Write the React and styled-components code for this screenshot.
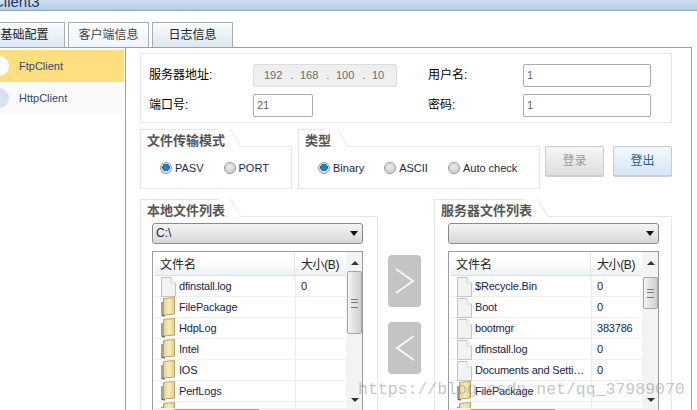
import React from 'react';
import styled, { createGlobalStyle } from 'styled-components';

const Global = createGlobalStyle`
  html, body { margin: 0; padding: 0; background: #fff; }
  body { width: 697px; height: 410px; overflow: hidden; font-family: "Liberation Sans", "Noto Sans CJK SC", sans-serif; font-size: 11px; color: #111; }
  * { box-sizing: border-box; }
`;

const Page = styled.div`
  position: relative;
  width: 697px;
  height: 410px;
  overflow: hidden;
  display: flex;
  flex-direction: column;
`;

const TitleBar = styled.div`
  height: 11px;
  flex: none;
  overflow: hidden;
  background: linear-gradient(#cfe0f0, #b3cde6);
  border-bottom: 1px solid #8ea6bf;
  font-size: 15px;
  line-height: 4px;
  color: #1e3a5a;
  margin-left: -7px;
`;

const TabStrip = styled.div`
  display: flex;
  gap: 3px;
  height: 36px;
  flex: none;
  padding-top: 11px;
  margin-left: -16px;
  width: 706px;
`;

const Tab = styled.div`
  width: 81px;
  height: 25px;
  border: 1px solid #a6adb5;
  border-bottom: 0;
  background: ${p => p.$active ? 'linear-gradient(#fdfeff, #eef4fa)' : 'linear-gradient(#fafbfd, #dce7f2)'};
  text-align: center;
  font-size: 12px;
  line-height: 25px;
  color: ${p => p.$active ? '#444' : '#222'};
`;

const Body = styled.div`
  flex: 1;
  width: 692px;
  display: flex;
  min-height: 0;
  border-top: 1px solid #9aa0a6;
  border-right: 1px solid #9aa0a6;
`;

const Sidebar = styled.div`
  width: 126px;
  flex: none;
  padding-top: 2px;
  border-right: 1px solid #9aa0a6;
`;

const SideItem = styled.div`
  display: flex;
  align-items: center;
  gap: 10px;
  height: 32px;
  width: 124px;
  overflow: hidden;
  background: ${p => p.$active ? '#ffdf7d' : '#fafafa'};
  color: #36486b;
  font-size: 11px;
`;

const SideDot = styled.span`
  width: 20px;
  height: 20px;
  margin-left: -11px;
  border-radius: 50%;
  flex: none;
  background: ${p => p.$active ? '#fff' : '#d6e2ef'};
`;

const Main = styled.div`
  flex: 1;
  min-width: 0;
  padding: 5px 19px 0 14px;
  display: flex;
  flex-direction: column;
  gap: 6px;
`;

const ServerBox = styled.div`
  height: 70px;
  border: 1px solid #e6e6e6;
  display: grid;
  grid-template-columns: 279px 1fr;
  padding: 10px 0 0 8px;
`;

const FormRow = styled.div`
  display: flex;
  align-items: flex-start;
  height: 30px;
`;

const Label = styled.span`
  width: ${p => p.$w}px;
  flex: none;
  font-size: 12px;
  line-height: 22px;
  color: #000;
`;

const Field = styled.div`
  width: ${p => p.$w}px;
  height: 23px;
  border: 1px solid #ababab;
  border-radius: 2px;
  background: #fff;
  color: #5a6478;
  line-height: 21px;
  padding-left: 3px;
`;

const IpField = styled.div`
  width: 144px;
  height: 23px;
  border: 1px solid #dcdcdc;
  border-radius: 2px;
  background: #efefef;
  color: #6a6a6a;
  line-height: 21px;
  padding-left: 10px;
  display: flex;
`;

const IpPart = styled.span`
  width: 36px;
  flex: none;
`;

const IpDot = styled.span`
  margin-left: 8px;
`;

const Middle = styled.div`
  display: flex;
  height: 60px;
  gap: 6px;
`;

const Group = styled.div`
  width: ${p => p.$w}px;
  flex: none;
  display: flex;
  flex-direction: column;
`;

const GroupTab = styled.div`
  position: relative;
  z-index: 1;
  width: ${p => p.$w}px;
  height: 18px;
  margin-bottom: -1px;
  background: #fff;
  border: 1px solid #e6e6e6;
  border-width: 1px 0 0 1px;
  padding-left: 6px;
  font-size: 13px;
  font-weight: bold;
  line-height: 22px;
  white-space: nowrap;
  color: #555;
  &::after {
    content: '';
    position: absolute;
    z-index: -1;
    top: -1px;
    right: -6px;
    width: 12px;
    height: 18px;
    background: #fff;
    border-right: 1px solid #e6e6e6;
    transform: skewX(30deg);
    transform-origin: top right;
  }
`;

const GroupBody = styled.div`
  flex: 1;
  border: 1px solid #e6e6e6;
  min-height: 0;
`;

const RadioRow = styled.div`
  display: flex;
  align-items: center;
  height: 100%;
  padding: 1px 0 0 19px;
  gap: ${p => p.$gap}px;
`;

const RadioItem = styled.label`
  display: flex;
  align-items: center;
  gap: 3px;
  color: #1b2a4c;
`;

const RadioDot = styled.span`
  width: 12px;
  height: 12px;
  border-radius: 50%;
  flex: none;
  border: 1px solid #9a9a9a;
  background: ${p => p.$on
    ? 'radial-gradient(circle at 50% 45%, #1f7fc4 0 3px, #0b4f86 3.5px, #dfe5ea 4px, #c6ccd2 100%)'
    : 'radial-gradient(circle at 45% 40%, #eeeeee, #c4c4c4)'};
`;

const ActionButtons = styled.div`
  display: flex;
  gap: 9px;
  padding-top: 17px;
  margin-left: -1px;
`;

const ActionButton = styled.div`
  width: 59px;
  height: 31px;
  border: 1px solid #c9ccd0;
  border-bottom-width: 2px;
  border-radius: 2px;
  text-align: center;
  line-height: 28px;
  font-size: 12px;
  background: ${p => p.$on ? 'linear-gradient(#f4f8fc, #d6e6f4)' : 'linear-gradient(#f6f6f6, #dedede)'};
  color: ${p => p.$on ? '#2f5f98' : '#9a9a9a'};
`;

const Lists = styled.div`
  display: flex;
  flex: 1;
  min-height: 0;
  margin-top: 4px;
`;

const FileGroup = styled(Group)`
  height: 220px;
`;

const FileGroupBody = styled(GroupBody)`
  padding: 6px ${p => p.$right}px 0 ${p => p.$left}px;
  overflow: hidden;
`;

const Combo = styled.div`
  position: relative;
  height: 21px;
  border: 1px solid #8a8a8a;
  border-radius: 3px;
  background: linear-gradient(#f4f4f4, #d8d8d8);
  padding-left: 3px;
  line-height: 19px;
  font-size: 12px;
  color: #1b2a4c;
  &::after {
    content: '';
    position: absolute;
    right: 4px;
    top: 7px;
    border: 4px solid transparent;
    border-top: 5px solid #111;
    border-bottom: 0;
  }
`;

const ListFrame = styled.div`
  position: relative;
  margin-top: 7px;
  height: 170px;
  border: 1px solid #9c9c9c;
  border-bottom: 0;
  padding-left: 1px;
  display: flex;
  overflow: hidden;
`;

const ListCols = styled.div`
  width: 192px;
  flex: none;
`;

const HeaderRow = styled.div`
  display: grid;
  grid-template-columns: 140px 52px;
  height: 24px;
  background: linear-gradient(#ffffff 30%, #eef1f4);
  border-bottom: 1px solid #e0e0e0;
  font-size: 12px;
  line-height: 26px;
  color: #222;
`;

const HeaderCell = styled.div`
  padding-left: ${p => p.$pad}px;
  border-left: ${p => p.$line ? '1px solid #e4e4e4' : '0'};
  white-space: nowrap;
  letter-spacing: ${p => p.$line ? '-0.4px' : '0'};
`;

const Row = styled.div`
  display: grid;
  grid-template-columns: 141px 51px;
  height: 21px;
  border-bottom: 1px solid #eeeeee;
  line-height: 21px;
  letter-spacing: -0.2px;
  color: #1b2350;
`;

const NameCell = styled.div`
  display: flex;
  align-items: center;
  gap: 3px;
  padding-left: 7px;
  white-space: nowrap;
  overflow: hidden;
`;

const SizeCell = styled.div`
  padding-left: 5px;
  border-left: 1px solid #eeeeee;
`;

const ScrollV = styled.div`
  width: 18px;
  flex: none;
  background: #f3f3f3;
  position: relative;
`;

const ScrollArrow = styled.span`
  position: absolute;
  left: 5px;
  ${p => p.$up ? 'top: 9px; border-bottom: 4px solid #333;' : 'top: 146px; border-top: 4px solid #333;'}
  border-left: 4px solid transparent;
  border-right: 4px solid transparent;
`;

const ScrollThumb = styled.div`
  position: absolute;
  left: 1px;
  top: ${p => p.$top}px;
  width: 15px;
  height: ${p => p.$h}px;
  border: 1px solid #a5a5a5;
  border-radius: 2px;
  background: linear-gradient(90deg, #f4f4f4, #cfcfcf);
  &::after {
    content: '';
    position: absolute;
    left: 3px;
    top: 50%;
    margin-top: -4px;
    width: 7px;
    height: 7px;
    border-top: 1px solid #777;
    border-bottom: 1px solid #777;
    background: linear-gradient(transparent 2px, #777 2px 3px, transparent 3px);
  }
`;

const ScrollH = styled.div`
  position: absolute;
  left: 1px;
  right: 1px;
  top: 156px;
  height: 14px;
  background: #f0f0f0;
  &::after {
    content: '';
    position: absolute;
    left: 19px;
    top: 1px;
    width: 85px;
    height: 12px;
    border: 1px solid #a5a5a5;
    border-radius: 2px;
    background: #eaeaea;
  }
`;

const ArrowColumn = styled.div`
  width: 56px;
  flex: none;
  display: flex;
  flex-direction: column;
  align-items: center;
  gap: 15px;
  padding: 56px 3px 0 0;
`;

const ArrowButton = styled.div`
  width: 33px;
  height: 52px;
  border-radius: 4px;
  background: #c4c4c4;
  display: flex;
  align-items: center;
  justify-content: center;
`;

const Watermark = styled.div`
  position: absolute;
  left: 358px;
  top: 380px;
  font-family: "Liberation Mono", monospace;
  font-size: 16.5px;
  color: rgba(140, 140, 140, 0.5);
  white-space: nowrap;
`;

const FileIcon = () => (
  <svg width="15" height="20" viewBox="0 0 15 20" style={{ flex: 'none' }}>
    <path d="M.5.5H10L14.5 6V19.5H.5Z" fill="#f2f2f2" stroke="#c4c4c4" />
    <path d="M10 .5V6H14.5" fill="#fff" stroke="#d4d4d4" />
  </svg>
);

const FolderIcon = () => (
  <svg width="15" height="20" viewBox="0 0 15 20" style={{ flex: 'none' }}>
    <defs>
      <linearGradient id="folderFill" x1="0" x2="1" y1="0" y2="0">
        <stop offset="0" stopColor="#e8cf84" />
        <stop offset="0.5" stopColor="#f8ecc0" />
        <stop offset="1" stopColor="#e6cd80" />
      </linearGradient>
    </defs>
    <path d="M2.5 1.5L13.5.5V17L2.5 18Z" fill="url(#folderFill)" stroke="#b8a264" />
    <path d="M1 5V18.5L4 19" fill="none" stroke="#4a4020" />
  </svg>
);

const Chevron = ({ left }) => (
  <svg width="22" height="28" viewBox="0 0 22 28">
    <path d={left ? 'M20 2L3 14L20 26' : 'M2 2L19 14L2 26'} fill="none" stroke="#fff" strokeWidth="2" opacity="0.85" />
  </svg>
);

const FileList = ({ rows, thumbTop, thumbH }) => (
  <ListFrame>
    <ListCols>
      <HeaderRow>
        <HeaderCell $pad={6}>文件名</HeaderCell>
        <HeaderCell $pad={6} $line>大小(B)</HeaderCell>
      </HeaderRow>
      {rows.map((r, i) => (
        <Row key={i}>
          <NameCell>{r[2] ? <FolderIcon /> : <FileIcon />}{r[0]}</NameCell>
          <SizeCell>{r[1]}</SizeCell>
        </Row>
      ))}
    </ListCols>
    <ScrollV>
      <ScrollArrow $up />
      <ScrollThumb $top={thumbTop} $h={thumbH} />
      <ScrollArrow />
    </ScrollV>
    <ScrollH />
  </ListFrame>
);

const localRows = [
  ['dfinstall.log', '0'],
  ['FilePackage', '', 1],
  ['HdpLog', '', 1],
  ['Intel', '', 1],
  ['IOS', '', 1],
  ['PerfLogs', '', 1],
  ['', '', 1],
];

const serverRows = [
  ['$Recycle.Bin', '0'],
  ['Boot', '0'],
  ['bootmgr', '383786'],
  ['dfinstall.log', '0'],
  ['Documents and Setti…', '0'],
  ['FilePackage', '', 1],
  ['', '', 1],
];

const ipParts = ['192', '168', '100', '10'];

export default function App() {
  return (
    <Page>
      <Global />
      <TitleBar>Client3</TitleBar>
      <TabStrip>
        <Tab>基础配置</Tab>
        <Tab $active>客户端信息</Tab>
        <Tab>日志信息</Tab>
      </TabStrip>
      <Body>
        <Sidebar>
          <SideItem $active><SideDot $active />FtpClient</SideItem>
          <SideItem><SideDot />HttpClient</SideItem>
        </Sidebar>
        <Main>
          <ServerBox>
            <div>
              <FormRow>
                <Label $w={104}>服务器地址:</Label>
                <IpField>
                  {ipParts.map((part, i) => (
                    <IpPart key={part}>{part}{i < 3 && <IpDot>.</IpDot>}</IpPart>
                  ))}
                </IpField>
              </FormRow>
              <FormRow>
                <Label $w={104}>端口号:</Label>
                <Field $w={60}>21</Field>
              </FormRow>
            </div>
            <div>
              <FormRow>
                <Label $w={95}>用户名:</Label>
                <Field $w={128}>1</Field>
              </FormRow>
              <FormRow>
                <Label $w={95}>密码:</Label>
                <Field $w={128}>1</Field>
              </FormRow>
            </div>
          </ServerBox>
          <Middle>
            <Group $w={152}>
              <GroupTab $w={85}>文件传输模式</GroupTab>
              <GroupBody>
                <RadioRow $gap={20}>
                  <RadioItem><RadioDot $on />PASV</RadioItem>
                  <RadioItem><RadioDot />PORT</RadioItem>
                </RadioRow>
              </GroupBody>
            </Group>
            <Group $w={242}>
              <GroupTab $w={34}>类型</GroupTab>
              <GroupBody>
                <RadioRow $gap={20}>
                  <RadioItem><RadioDot $on />Binary</RadioItem>
                  <RadioItem><RadioDot />ASCII</RadioItem>
                  <RadioItem><RadioDot />Auto check</RadioItem>
                </RadioRow>
              </GroupBody>
            </Group>
            <ActionButtons>
              <ActionButton>登录</ActionButton>
              <ActionButton $on>登出</ActionButton>
            </ActionButtons>
          </Middle>
          <Lists>
            <FileGroup $w={238}>
              <GroupTab $w={85}>本地文件列表</GroupTab>
              <FileGroupBody $left={11} $right={14}>
                <Combo>C:\</Combo>
                <FileList rows={localRows} thumbTop={19} thumbH={63} />
              </FileGroupBody>
            </FileGroup>
            <ArrowColumn>
              <ArrowButton><Chevron /></ArrowButton>
              <ArrowButton><Chevron left /></ArrowButton>
            </ArrowColumn>
            <FileGroup $w={238}>
              <GroupTab $w={98}>服务器文件列表</GroupTab>
              <FileGroupBody $left={13} $right={12}>
                <Combo />
                <FileList rows={serverRows} thumbTop={25} thumbH={32} />
              </FileGroupBody>
            </FileGroup>
          </Lists>
        </Main>
      </Body>
      <Watermark>https://blog.csdn.net/qq_37989070</Watermark>
    </Page>
  );
}
